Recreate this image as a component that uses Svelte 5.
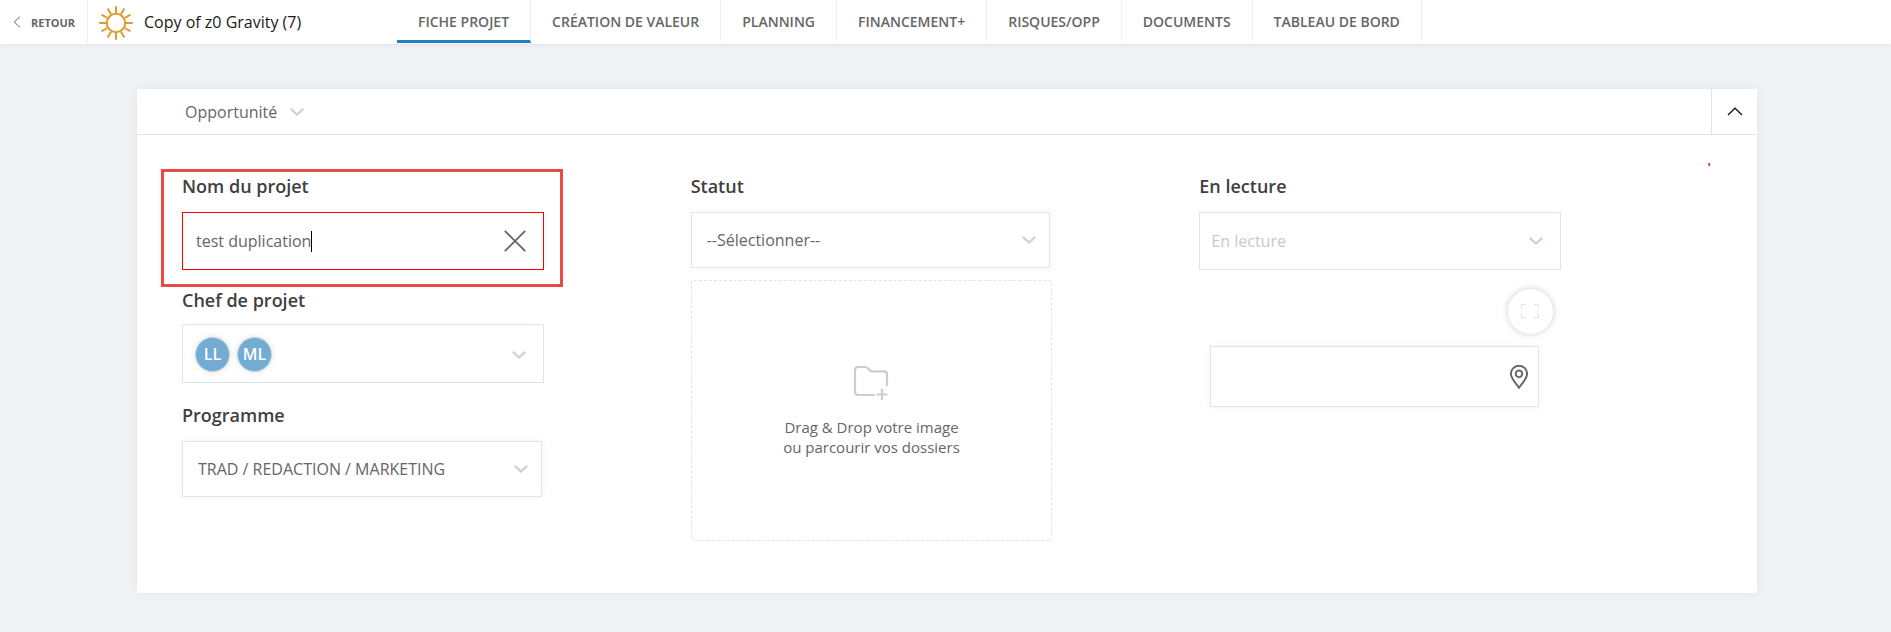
<script>
  const tabs = [
    'FICHE PROJET',
    'CRÉATION DE VALEUR',
    'PLANNING',
    'FINANCEMENT+',
    'RISQUES/OPP',
    'DOCUMENTS',
    'TABLEAU DE BORD'
  ];
  const managers = ['LL', 'ML'];
  const rays = Array.from({ length: 12 }, (_, i) => i * 30);
  let active = $state(0);
  let projectName = $state('test duplication');
</script>

{#snippet chevron()}
  <svg class="chevron" viewBox="0 0 14 8" width="14" height="8" aria-hidden="true">
    <path d="M.8 .8 L7 6.500 L13.200 .8" />
  </svg>
{/snippet}

<header class="topbar">
  <a class="back" href="#retour">
    <svg viewBox="0 0 8 12" width="8" height="12" aria-hidden="true"><path d="M7 .7 L1.2 6 L7 11.3" /></svg>
    RETOUR
  </a>
  <div class="project">
    <svg class="sun" viewBox="-17 -17 34 34" width="34" height="34" aria-hidden="true">
      <circle r="9.2" />
      {#each rays as angle}
        <path d="M0 -10 V-16.8" transform="rotate({angle})" />
      {/each}
    </svg>
    <h1>Copy of z0 Gravity (7)</h1>
  </div>
  <nav>
    {#each tabs as tab, i}
      <a href="#tab-{i}" class:active={active === i} onclick={() => (active = i)}>{tab}</a>
    {/each}
  </nav>
</header>

<main>
  <section class="card">
    <div class="card-head">
      <div class="stage">
        <select aria-label="Type">
          <option>Opportunité</option>
        </select>
        {@render chevron()}
      </div>
      <button class="collapse" type="button" aria-label="Replier">
        <svg viewBox="0 0 16 9" width="16" height="9" aria-hidden="true"><path d="M1 8 L8 1.2 L15 8" /></svg>
      </button>
    </div>

    <form class="card-body">
      <div class="column">
        <div class="field highlighted">
          <label for="name">Nom du projet</label>
          <div class="box invalid">
            <input id="name" class="name" type="text" bind:value={projectName} />
            <span class="caret"></span>
            <button class="clear" type="button" aria-label="Effacer" onclick={() => (projectName = '')}>
              <svg viewBox="0 0 22 22" width="22" height="22" aria-hidden="true"><path d="M.8 .8 L21.2 21.2 M21.2 .8 L.8 21.2" /></svg>
            </button>
          </div>
        </div>
        <div class="field managers">
          <label for="managers">Chef de projet</label>
          <button id="managers" class="box people" type="button">
            {#each managers as person}
              <span class="avatar">{person}</span>
            {/each}
            {@render chevron()}
          </button>
        </div>
        <div class="field">
          <label for="program">Programme</label>
          <div class="box single">
            <select id="program">
              <option>TRAD / REDACTION / MARKETING</option>
            </select>
            {@render chevron()}
          </div>
        </div>
      </div>

      <div class="column">
        <div class="field">
          <label for="status">Statut</label>
          <div class="box single">
            <select id="status">
              <option>--Sélectionner--</option>
            </select>
            {@render chevron()}
          </div>
        </div>
        <button class="dropzone" type="button">
          <svg viewBox="0 0 36 36" width="36" height="36" aria-hidden="true">
            <path d="M21.5 30 H5 a3 3 0 0 1 -3 -3 V5 a3 3 0 0 1 3 -3 H12 c1.3 0 2 .5 2.8 1.4 L17 5.600 c.5 .5 1 .7 2 .7 H31 a3 3 0 0 1 3 3 V21" />
            <path d="M29 24 V35 M23.500 29.500 H34.500" />
          </svg>
          <span>Drag &amp; Drop votre image<br />ou parcourir vos dossiers</span>
        </button>
      </div>

      <div class="column">
        <div class="field">
          <label for="readers">En lecture</label>
          <div class="box muted">
            <select id="readers">
              <option>En lecture</option>
            </select>
            {@render chevron()}
          </div>
        </div>
        <div class="place">
          <button class="expand" type="button" aria-label="Agrandir">
            <svg viewBox="0 0 18 14" width="18" height="14" aria-hidden="true">
              <path d="M.5 4.500 V.5 H5 M13 .5 H17.500 V4.500 M17.500 9.500 V13.500 H13 M5 13.500 H.5 V9.500" />
            </svg>
          </button>
          <div class="box address">
            <input type="text" aria-label="Adresse" />
            <svg viewBox="0 0 18 24" width="18" height="24" aria-hidden="true">
              <path d="M9 22.800 C6.500 18.500 .9 14 .9 8.800 A8.100 8.100 0 0 1 17.100 8.800 C17.100 14 11.500 18.500 9 22.800 Z" />
              <circle cx="9" cy="8.800" r="3.300" />
            </svg>
          </div>
        </div>
      </div>
      <span class="mark">'</span>
    </form>
  </section>
</main>

<style>
  :global(body) {
    background: #f0f4f7;
    color: #666;
    font-family: 'Open Sans', 'Noto Sans', sans-serif;
    font-size: 16px;
  }
  .topbar, .topbar *, main, main * {
    box-sizing: border-box;
  }
  svg {
    fill: none;
    flex: none;
    stroke: currentColor;
  }
  button, input, select {
    appearance: none;
    background: none;
    border: 0;
    color: inherit;
    font: inherit;
    margin: 0;
    outline: 0;
    padding: 0;
  }
  select {
    flex: 1;
    min-width: 0;
  }
  a {
    color: inherit;
    text-decoration: none;
  }

  .topbar {
    background: #fff;
    box-shadow: 0 0 8px rgba(0, 0, 0, 0.08);
    display: flex;
    height: 44px;
    position: relative;
  }
  .back {
    align-items: center;
    border-right: 1px solid #edf1f3;
    display: flex;
    font-size: 11px;
    font-weight: 700;
    gap: 10px;
    padding: 0 12px 0 13px;
    width: 88px;
  }
  .project {
    align-items: center;
    display: flex;
    gap: 11px;
    padding: 2px 0 0 11px;
    width: 309px;
  }
  .sun {
    color: #e09a2f;
    stroke-width: 2;
  }
  h1 {
    color: #1a1a1a;
    font-size: 16px;
    font-weight: 500;
    line-height: 22px;
    margin: 0 0 2px;
    white-space: nowrap;
  }
  nav {
    display: flex;
  }
  nav a {
    align-items: center;
    border-bottom: 3px solid transparent;
    border-right: 1px solid #edf1f3;
    display: flex;
    font-size: 14px;
    font-weight: 600;
    height: 43px;
    padding: 3px 21px 0;
    white-space: nowrap;
  }
  nav a.active {
    border-bottom-color: #1e7fc6;
  }

  main {
    padding: 45px 134px 40px 137px;
  }
  .card {
    background: #fff;
    box-shadow: 0 0 14px rgba(0, 0, 0, 0.07);
  }
  .card-head {
    border-bottom: 1px solid #dfe5e8;
    display: flex;
    height: 46px;
    justify-content: space-between;
    padding-left: 48px;
  }
  .stage {
    align-items: center;
    display: flex;
    gap: 12px;
  }
  .chevron {
    color: #ccd3d6;
    pointer-events: none;
    stroke-width: 2.3;
  }
  .collapse {
    border-left: 1px solid #dfe5e8;
    color: #111;
    width: 46px;
  }
  .collapse svg {
    display: block;
    margin: 0 auto;
    stroke-width: 1.2;
  }
  .card-body {
    display: grid;
    grid-template-columns: repeat(3, 1fr);
    min-height: 458px;
    padding: 37px 49px 51px 45px;
    position: relative;
  }
  .column {
    padding-right: 147px;
  }
  .field {
    margin-bottom: 16px;
    position: relative;
  }
  label {
    color: #404040;
    display: block;
    font-size: 18px;
    font-weight: 600;
    line-height: 28px;
    margin-bottom: 12px;
  }
  .highlighted::after {
    border: 3px solid #ea4b47;
    content: '';
    inset: -3px -19px -17px -21px;
    pointer-events: none;
    position: absolute;
  }
  .box {
    align-items: center;
    border: 1px solid #dfe6e8;
    display: flex;
    height: 58px;
    padding: 0 17px 0 13px;
    width: 100%;
  }
  .invalid {
    border-color: #f00;
    box-shadow: 0 0 8px rgba(0, 0, 0, 0.05);
  }
  .name {
    field-sizing: content;
    max-width: 280px;
  }
  .caret {
    background: #000;
    height: 21px;
    width: 1px;
  }
  .clear {
    display: flex;
    margin-left: auto;
  }
  .clear svg {
    stroke-width: 1.8;
  }
  .managers label {
    margin-bottom: 10px;
  }
  .managers {
    margin-bottom: 18px;
  }
  .people {
    gap: 7px;
    height: 59px;
    padding: 2px 17px 0 12px;
  }
  .people .chevron {
    margin-left: auto;
  }
  .avatar {
    background: #72acd2;
    border: 1px solid #c5d6e2;
    border-radius: 50%;
    box-shadow: 0 0 6px rgba(0, 0, 0, 0.12);
    color: #fff;
    font-weight: 600;
    height: 35px;
    line-height: 33px;
    text-align: center;
    width: 35px;
  }
  .single {
    box-shadow: 0 0 8px rgba(0, 0, 0, 0.05);
    height: 56px;
    padding: 0 13px 0 15px;
    width: calc(100% - 2px);
  }
  .muted {
    color: #c3cbd0;
    padding-left: 11px;
  }
  .dropzone {
    align-items: center;
    border: 1px dashed #dfe5e5;
    border-radius: 3px;
    display: flex;
    flex-direction: column;
    font-size: 15px;
    gap: 16px;
    height: 261px;
    justify-content: center;
    line-height: 20px;
    margin-top: -4px;
    width: 100%;
  }
  .dropzone svg {
    color: #c8ced2;
    stroke-width: 2.2;
  }
  .place {
    align-items: flex-end;
    display: flex;
    flex-direction: column;
    gap: 12px;
    padding: 3px 8px 0 11px;
  }
  .expand {
    background: #fff;
    border-radius: 50%;
    box-shadow: 0 0 7px rgba(0, 0, 0, 0.2);
    color: #dce4e7;
    height: 45px;
    width: 45px;
  }
  .address {
    box-shadow: 0 0 8px rgba(0, 0, 0, 0.05);
    height: 61px;
    margin-right: 14px;
    padding: 0 10px 0 12px;
    width: calc(100% - 14px);
  }
  .address input {
    flex: 1;
    min-width: 0;
  }
  .address svg {
    stroke-width: 1.9;
  }
  .mark {
    color: #c2350b;
    font-size: 13px;
    font-weight: 700;
    line-height: 16px;
    position: absolute;
    right: 46px;
    top: 24px;
  }
</style>
